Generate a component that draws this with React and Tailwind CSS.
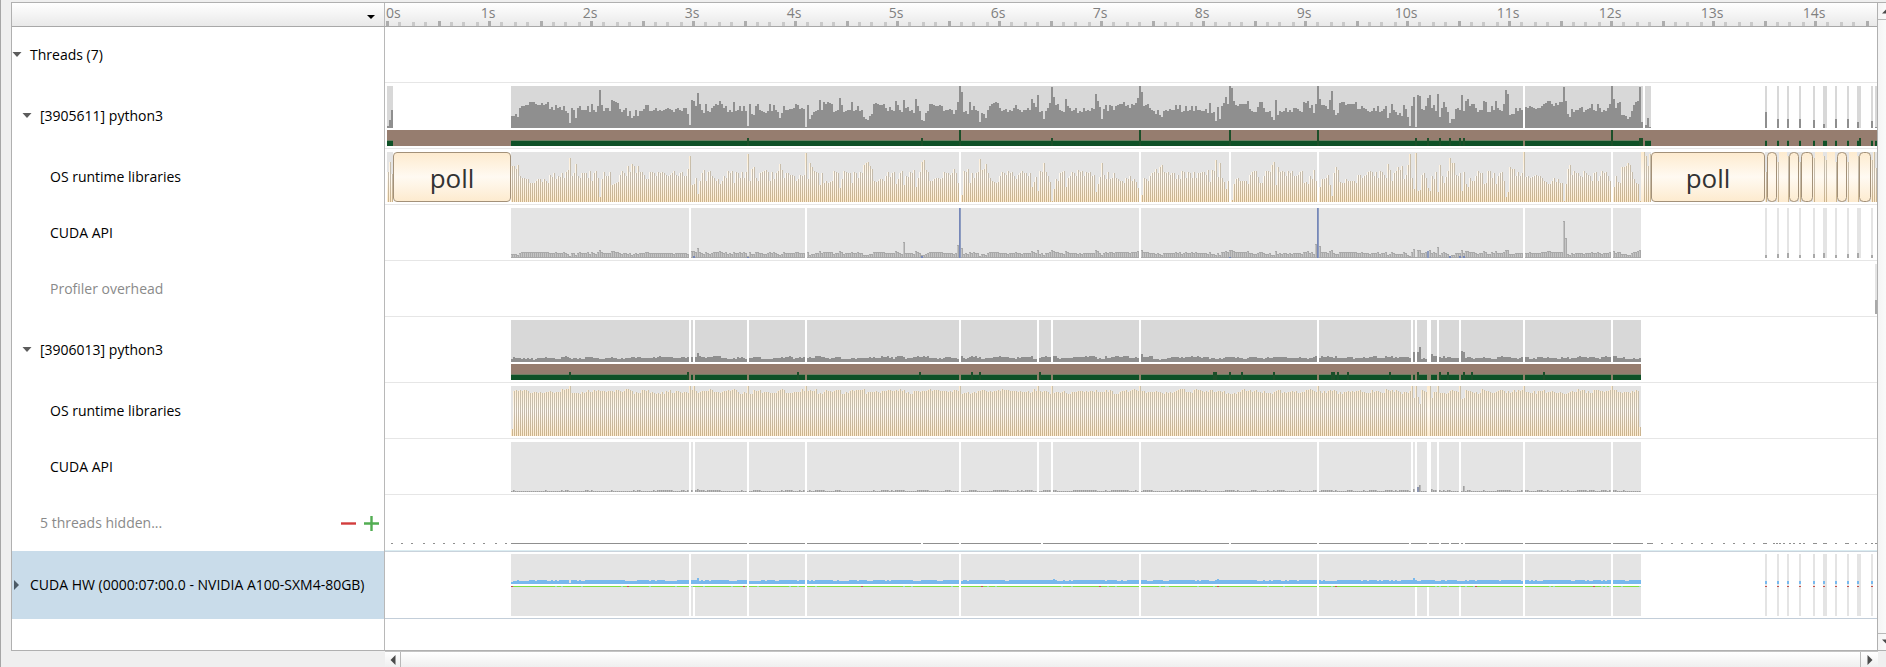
import React from "react";

const ORIGIN = 385;
const SPAN = 1492;
const START = 511;
const END = 1641;

/* Utilisation samples of the main thread: [start position, one height per 2px bin] */
const SAMPLES = [
  [511, [12, 12, 14, 11, 20, 22, 22, 23, 23, 26, 26, 26, 24, 23, 23, 25, 23, 24, 26, 19, 21, 18, 23, 20, 21, 18, 22, 17, 15, 5, 20, 18, 10, 20, 22, 18, 18, 18, 22, 16, 24, 18, 16, 22]],
  [599, [38, 23, 17, 20, 20, 17, 28, 27, 26, 25, 19, 16, 18, 20, 12, 17, 10, 12, 18, 12, 17, 17, 19, 23, 23, 17, 17, 18, 20, 17, 18, 17, 18, 19, 20, 19, 18, 16, 19, 20, 18, 17, 20, 20, 14]],
  [689, [3, 28, 27, 22, 35, 24, 18, 15, 24, 17, 16, 20, 22, 24, 23, 27, 24, 20, 22, 16, 18, 16, 26, 17, 18, 22, 17, 22, 17]],
  [747, [2, 24, 14, 13, 22, 24, 18, 17, 16, 15, 17, 24, 17, 23, 18, 16, 10, 15, 22, 18, 18, 19, 19, 20, 24, 23, 19, 20, 19]],
  [805, [1, 23, 9, 13, 16, 17, 18, 28, 18, 26, 24, 26, 25, 24, 16, 17, 18, 30, 23, 16, 17, 18, 18, 26, 17, 18, 22, 17, 18]],
  [863, [11, 9, 8, 12, 14, 24, 25, 24, 23, 23, 24, 20, 17, 21, 18, 17, 27, 23, 18, 16, 28, 20, 21, 17, 18, 15, 29, 22, 17, 8, 7, 15, 17, 24, 24, 23, 22, 22, 23, 22, 17, 18, 18, 19, 18, 14, 18, 26]],
  [959, [42, 36, 16, 17, 14, 26, 18, 22, 18, 17, 6, 15, 14, 10, 18, 22, 24, 25, 26, 25, 20, 17, 18, 19, 16, 18, 17, 20, 23, 19, 18, 16, 18, 18, 20, 18, 29, 25, 21, 33, 16, 17, 9, 17, 20, 25]],
  [1051, [41, 31, 23, 24, 18, 17, 16, 29, 22, 20, 17, 18, 20, 15, 17, 16, 20, 17, 18, 17, 20, 19, 34, 27, 21, 9, 19, 23, 17, 23, 22, 18, 22, 23, 24, 24, 26, 22, 23, 20, 24, 23, 25, 30]],
  [1139, [42, 36, 22, 23, 24, 20, 18, 17, 14, 18, 13, 11, 17, 18, 17, 19, 18, 18, 23, 19, 23, 16, 17, 22, 17, 18, 22, 17, 22, 18]],
  [1201, [17, 17, 19, 15, 25, 15, 16, 7, 21, 9, 22, 25, 31, 24, 42, 40, 27, 23, 22, 24, 24, 24, 24, 27, 19, 17, 16, 16, 21, 26, 26, 20, 16, 16, 17, 11, 8, 28, 13, 17, 16, 17, 20, 16, 18, 16, 20, 20, 19, 17, 16, 26, 25, 27, 20, 23, 15, 24]],
  [1317, [42, 29, 23, 23, 22, 19, 28, 37, 18, 13, 15, 25, 26, 26, 23, 24, 24, 24, 24, 26, 19, 19, 22, 20, 19, 17, 16, 17, 20, 17, 22, 16, 17, 19, 22, 10, 15, 24, 18, 16, 13, 15, 12, 23, 19, 11]],
  [1409, [2, 22, 31, 1, 33, 32, 19, 18, 22, 30, 33, 20, 23, 17, 34, 11, 20, 26, 21, 16, 5, 9, 9, 19, 20, 18, 33, 17, 27, 29, 22, 24, 24, 20, 16, 18, 18, 27, 26, 16, 16, 22, 18, 27, 20, 18, 17, 24]],
  [1505, [38, 34, 13, 14, 14, 20, 17, 20, 18, 0, 21, 20, 22, 21, 20, 19, 20, 20, 22, 24, 25, 27, 27, 24, 22, 25, 23, 26]],
  [1563, [41, 27, 14, 11, 19, 16, 18, 18, 20, 21, 16, 18, 19, 20, 24, 18, 17, 24, 20, 16, 18, 17, 20, 24]],
  [1611, [42, 29, 20, 25, 26, 13, 13, 12, 9, 11, 17, 23, 26, 27, 41]],
];

const LOAD = {};
SAMPLES.forEach(([start, values], s) => {
  const stop = s + 1 < SAMPLES.length ? SAMPLES[s + 1][0] : END;
  for (let x = start, i = 0; x < stop; x += 2, i += 1) {
    LOAD[x] = values[Math.min(i, values.length - 1)];
  }
});

const BINS = [];
for (let x = START; x < END; x += 2) BINS.push(x);

const noise = (n) => {
  const v = Math.sin(n * 12.9898) * 43758.5453;
  return v - Math.floor(v);
};
const wave = (x, seed) => {
  const k = Math.floor(x / 8);
  return 0.6 * noise(k + seed) + 0.4 * noise(x + seed * 3);
};

/* Short bursts of work after the main run: [position, width, height] */
const BURSTS = [
  [1765, 2, 16], [1777, 2, 9], [1787, 2, 9], [1799, 2, 9], [1813, 2, 8], [1823, 4, 4],
  [1835, 2, 9], [1847, 2, 9], [1857, 4, 6], [1871, 2, 7],
];

const GAPS_MAIN = [959, 1139, 1229, 1317, 1611];
const GAPS_API = [689, 805, 1139, 1523, 1611];
const GAPS_WORKER = [689, 693, 747, 805, 959, 1037, 1051, 1139, 1317, 1411, 1415, 1427, 1429, 1437, 1459, 1523, 1611];
const GAPS_HW = [689, 747, 805, 959, 1139, 1317, 1523, 1611];

function bars(list, base, width = 2) {
  return list.map(([x, h]) => `M${x} ${base}v${-h}h${width}v${h}z`).join("");
}

function Gaps({ at, y, height, fill = "#fff" }) {
  return <path d={bars(at.map((x) => [x, height]), y + height)} fill={fill} />;
}

function Chart({ height, label, children }) {
  return (
    <svg
      className="block max-w-none w-[1492px] shrink-0"
      style={{ height }}
      viewBox={`${ORIGIN} 0 ${SPAN} ${height}`}
      shapeRendering="crispEdges"
      role="img"
      aria-label={label}
    >
      {children}
    </svg>
  );
}

function Band({ segments, gaps, full = [], small }) {
  return (
    <>
      {segments.map(([x, w]) => (
        <g key={x}>
          <rect x={x} y="57" width={w} height="1" fill="#6f8064" />
          <rect x={x} y="58" width={w} height="5" fill="#0f5127" />
        </g>
      ))}
      <path d={bars(full.map((x) => [x, 16]), 63) + bars(small.map((x) => [x, 8]), 63)} fill="#1c4f29" />
      <Gaps at={gaps} y={57} height={6} fill="#8d8069" />
    </>
  );
}

function MainThreadChart() {
  return (
    <Chart height={65} label="Main thread utilisation">
      <path d="M387 3h6v42h-6zM511 3h1132v42h-1132zM1645 3h6v42h-6z" fill="#d8d8d8" />
      {BURSTS.map(([x, w]) => <rect key={x} x={x} y="3" width={w} height="42" fill="#d8d8d8" />)}
      <rect x="1875" y="3" width="2" height="42" fill="#d8d8d8" />
      <path
        d={
          bars(BINS.map((x) => [x, LOAD[x]]), 45) +
          bars([[387, 2], [389, 8], [391, 18], [1641, 6], [1645, 3], [1647, 10], [1649, 1], [1875, 1]], 45) +
          BURSTS.map(([x, , h]) => bars([[x, h]], 45)).join("")
        }
        fill="#8f8f8f"
      />
      <Gaps at={[1523]} y={3} height={42} />
      <rect x="387" y="47" width="1490" height="16" fill="#967d6f" />
      <Band
        segments={[[387, 6], [511, 1132], [1645, 6], ...BURSTS.map(([x, w]) => [x, w]), [1875, 2]]}
        gaps={[1523]}
        full={[959, 1139, 1229, 1317, 1611]}
        small={[747, 921, 1051, 1415, 1427, 1439, 1449, 1459, 1463, 1639, 1641, 1859]}
      />
    </Chart>
  );
}

function CallGradients({ id }) {
  return (
    <defs>
      <linearGradient id={`${id}-fill`} gradientUnits="userSpaceOnUse" x1="0" y1="3" x2="0" y2="53">
        <stop offset="0" stopColor="#fdebcf" />
        <stop offset="0.5" stopColor="#fffaf2" />
        <stop offset="1" stopColor="#fdebcf" />
      </linearGradient>
      <linearGradient id={`${id}-edge`} gradientUnits="userSpaceOnUse" x1="0" y1="3" x2="0" y2="53">
        <stop offset="0" stopColor="#cdc1a8" />
        <stop offset="0.5" stopColor="#c4bbad" />
        <stop offset="1" stopColor="#ccb48c" />
      </linearGradient>
    </defs>
  );
}

function Calls({ id, list }) {
  return (
    <>
      <path d={bars(list, 53)} fill={`url(#${id}-fill)`} />
      <path d={bars(list.map(([x, h]) => [x + 1, h]), 53, 1)} fill={`url(#${id}-edge)`} />
    </>
  );
}

function MainRuntimeChart() {
  const list = BINS.map((x) => [x, Math.max(1, Math.round(50 - LOAD[x] * 1.19))]);
  return (
    <Chart height={55} label="Main thread OS runtime calls">
      <CallGradients id="main" />
      <path d="M387 3h6v50h-6zM511 3h1140v50h-1140zM1765 3h112v50h-112z" fill="#e4e4e4" />
      <Calls id="main" list={[[387, 30], [389, 40], [391, 28], ...list, [1643, 50], [1645, 46], [1647, 36], [1649, 48]]} />
      <path d="M1641 3h3v50h-3zM1779 3h8v50h-8zM1815 3h8v50h-8zM1827 3h8v50h-8zM1849 3h8v50h-8z" fill="url(#main-fill)" />
      <Calls id="main" list={[[1765, 30], [1777, 40], [1787, 46], [1799, 40], [1813, 44], [1823, 46], [1825, 42], [1835, 40], [1847, 40], [1857, 46], [1871, 42], [1873, 50], [1875, 34]]} />
      <Gaps at={GAPS_MAIN} y={3} height={50} />
      <g fill="url(#main-fill)" stroke="#a39179" shapeRendering="auto">
        {[[1767, 10], [1789, 10], [1801, 12], [1837, 10], [1859, 12]].map(([x, w]) => (
          <rect key={x} x={x + 0.5} y="3.5" width={w - 1} height="49" rx="4" />
        ))}
      </g>
    </Chart>
  );
}

function MainApiChart() {
  const special = { 697: 10, 903: 16, 957: 13, 961: 10, 1315: 14, 1319: 12, 1413: 9, 1437: 11, 1563: 37, 1565: 20 };
  const list = BINS.map((x) => [x, special[x] || Math.min(8, Math.max(1, Math.round(LOAD[x] * 0.2 + 1.2)))]);
  return (
    <Chart height={55} label="Main thread CUDA API calls">
      <rect x={START} y="3" width={END - START} height="50" fill="#e4e4e4" />
      {BURSTS.map(([x, w]) => <rect key={x} x={x} y="3" width={w} height="50" fill="#e4e4e4" />)}
      <path d={bars(list, 53) + BURSTS.map(([x], i) => bars([[x, 3 + (i % 3)]], 53)).join("")} fill="#a9a9a9" />
      <path d={list.filter(([, h]) => h > 2).map(([x, h]) => bars([[x, h - 2]], 52, 1)).join("")} fill="#c4c4c4" />
      <Gaps at={GAPS_API} y={3} height={50} />
      <path d={bars([[959, 50], [1317, 50], [1427, 7]], 53)} fill="#8c9bc0" />
      <path d={bars([[959, 50], [1317, 50]], 53, 1) + bars([[693, 2], [747, 1], [921, 2], [1229, 1], [1449, 2], [1459, 2], [1463, 2]], 53)} fill="#7687b8" />
    </Chart>
  );
}

function OverheadChart() {
  return (
    <Chart height={55} label="Profiler overhead">
      <rect x="1875" y="3" width="2" height="50" fill="#e4e4e4" />
      <rect x="1875" y="39" width="2" height="14" fill="#a9a9a9" />
    </Chart>
  );
}

function WorkerChart() {
  const special = { 697: 9, 1413: 10, 1417: 10, 1419: 15, 1431: 8, 1461: 11, 1463: 10, 961: 6, 1141: 8 };
  const list = BINS.map((x) => [x, special[x] || 2 + Math.round(0.4 + wave(x, 7) * 4)]);
  return (
    <Chart height={65} label="Worker thread utilisation">
      <rect x={START} y="3" width={END - START} height="42" fill="#d8d8d8" />
      <path d={bars(list, 45)} fill="#8f8f8f" />
      <Gaps at={GAPS_WORKER} y={3} height={42} />
      <rect x={START} y="47" width={END - START} height="16" fill="#967d6f" />
      <Band
        segments={[[START, END - START]]}
        gaps={GAPS_WORKER}
        small={[569, 687, 797, 919, 971, 979, 1039, 1213, 1215, 1229, 1241, 1273, 1331, 1333, 1337, 1347, 1389, 1417, 1439, 1447, 1463, 1471, 1543]}
      />
    </Chart>
  );
}

function WorkerRuntimeChart() {
  const low = { 511: 7, 1413: 38, 1417: 39, 1419: 32, 1431: 38, 1461: 37, 1463: 38, 1639: 9 };
  const list = BINS.map((x) => [
    x,
    low[x] || (GAPS_WORKER.includes(x) || x === 569 ? 50 : 42 + Math.round(wave(x, 31) * 6 - 0.6)),
  ]);
  return (
    <Chart height={55} label="Worker thread OS runtime calls">
      <CallGradients id="worker" />
      <rect x={START} y="3" width={END - START} height="50" fill="#e4e4e4" />
      <Calls id="worker" list={list} />
      <rect x="1427" y="3" width="3" height="50" fill="url(#worker-fill)" />
    </Chart>
  );
}

function WorkerApiChart() {
  const special = { 697: 3, 1413: 3, 1417: 5, 1419: 7, 1431: 3, 1463: 6 };
  const list = BINS.map((x) => [x, special[x] || (wave(x, 7) > 0.55 ? 2 : 1)]);
  return (
    <Chart height={55} label="Worker thread CUDA API calls">
      <rect x={START} y="3" width={END - START} height="50" fill="#e4e4e4" />
      <path d={bars(list, 53)} fill="#b9b9b9" />
      <path d={bars(list, 53, 1)} fill="#9f9f9f" />
      <Gaps at={GAPS_WORKER} y={3} height={50} />
      <rect x="1417" y="48" width="2" height="5" fill="#8c95b0" />
    </Chart>
  );
}

function HiddenThreadsChart() {
  const lead = [391, 401, 411, 423, 433, 443, 453, 463, 473, 483, 495, 505];
  const tail = [1661, 1671, 1681, 1691, 1701, 1711, 1723, 1733, 1743, 1753, 1763, 1765, 1773, 1776, 1779, 1783, 1789, 1793, 1799, 1803, 1813, 1815, 1823, 1825, 1835, 1845, 1847, 1855, 1865, 1871, 1875];
  return (
    <Chart height={55} label="Hidden threads activity">
      <path d={`M511 48h1132v1h-1132zM1647 48h6v1h-6z${bars([...lead, ...tail].map((x) => [x, 1]), 49)}`} fill="#8f8f8f" />
      <Gaps at={[747, 805, 921, 959, 1041, 1229, 1317, 1409, 1427, 1439, 1449, 1459, 1463, 1523, 1611]} y={48} height={1} />
    </Chart>
  );
}

function HardwareChart() {
  const special = { 511: 2, 569: 1, 697: 6, 1053: 5, 1217: 5, 1413: 6 };
  const list = BINS.map((x) => [x, special[x] || (wave(x, 19) > 0.36 ? 4 : 3)]);
  return (
    <Chart height={66} label="CUDA hardware activity">
      <rect x={START} y="2" width={END - START} height="62" fill="#e4e4e4" />
      {BURSTS.map(([x, w]) => <rect key={x} x={x} y="2" width={w} height="62" fill="#e4e4e4" />)}
      <path d={bars(list, 32) + BURSTS.map(([x]) => bars([[x, 3]], 32)).join("")} fill="#78b9ee" />
      <rect x={START} y="32" width={END - START} height="2" fill="#fff" />
      <rect x={START} y="34" width={END - START} height="1" fill="#80e040" />
      <path d={bars(BINS.filter((x) => noise(x + 5) > 0.92).map((x) => [x, 1]), 35)} fill="#9be0b0" />
      <path
        d={bars([511, 627, 743, 861, 981, 1099, 1217, 1335, 1475, 1593, ...BURSTS.map(([x]) => x)].map((x) => [x, 1]), 35)}
        fill="#c4504a"
      />
      <Gaps at={GAPS_HW} y={2} height={62} />
      <Gaps at={[693, 1415, 1427, 1459]} y={35} height={29} />
    </Chart>
  );
}

function Caret({ open = true }) {
  return (
    <svg width="10" height="10" viewBox="0 0 10 10" aria-hidden="true">
      {open ? <path d="M0.5 2h9L5 7z" fill="#5c5c5c" /> : <path d="M2 0v10l5-5z" fill="#4d5b66" />}
    </svg>
  );
}

function Poll({ className }) {
  return (
    <div
      className={`absolute top-[3px] flex h-[50px] items-center justify-center rounded border border-[#a39179] bg-linear-to-b from-[#fdebcf] via-[#fffaf2] to-[#fdebcf] pt-[2px] text-[26px] leading-8 text-[#333] ${className}`}
    >
      poll
    </div>
  );
}

const ROWS = [
  { name: "Threads (7)", indent: "pl-0", caret: true, open: true, height: "h-14" },
  { name: "[3905611] python3", indent: "pl-[10px]", caret: true, open: true, height: "h-[66px]", chart: MainThreadChart },
  { name: "OS runtime libraries", indent: "pl-[38px]", height: "h-14", chart: MainRuntimeChart, polls: true },
  { name: "CUDA API", indent: "pl-[38px]", height: "h-14", chart: MainApiChart },
  { name: "Profiler overhead", indent: "pl-[38px]", height: "h-14", muted: true, chart: OverheadChart },
  { name: "[3906013] python3", indent: "pl-[10px]", caret: true, open: true, height: "h-[66px]", chart: WorkerChart },
  { name: "OS runtime libraries", indent: "pl-[38px]", height: "h-14", chart: WorkerRuntimeChart },
  { name: "CUDA API", indent: "pl-[38px]", height: "h-14", chart: WorkerApiChart },
  { name: "5 threads hidden...", indent: "pl-[28px]", height: "h-14", muted: true, tools: true, chart: HiddenThreadsChart },
  { name: "CUDA HW (0000:07:00.0 - NVIDIA A100-SXM4-80GB)", indent: "pl-0", caret: true, open: false, height: "h-[68px]", selected: true, chart: HardwareChart },
];

function Row({ row }) {
  const ChartBody = row.chart;
  const line = row.selected
    ? "border-t border-b border-t-[#c9d3dc] border-b-[#c3ced9]"
    : row.tools
      ? "border-b border-[#dcedf2]"
      : "border-b border-[#e6e6e6]";
  return (
    <div className={`flex ${row.height}`}>
      <div
        className={`flex w-[373px] shrink-0 items-center border-r border-[#b8b8b8] pr-[5px] ${row.indent} ${
          row.selected ? "bg-[#c9dcea]" : ""
        } ${row.muted ? "text-[#8a8a8a]" : "text-black"}`}
      >
        {row.caret && (
          <button type="button" className="mr-2 shrink-0" aria-label={`Toggle ${row.name}`} aria-expanded={row.open}>
            <Caret open={row.open} />
          </button>
        )}
        <span className="grow whitespace-nowrap">{row.name}</span>
        {row.tools && (
          <span className="flex gap-2">
            <button type="button" aria-label="Show fewer threads">
              <svg className="block" width="15" height="15" viewBox="0 0 15 15" aria-hidden="true">
                <path d="M0 7.5h15" stroke="#d23c3c" strokeWidth="2.4" />
              </svg>
            </button>
            <button type="button" aria-label="Show more threads">
              <svg className="block" width="15" height="15" viewBox="0 0 15 15" aria-hidden="true">
                <path d="M0 7.5h15M7.5 0v15" stroke="#52ad52" strokeWidth="2.4" />
              </svg>
            </button>
          </span>
        )}
      </div>
      <div className={`relative min-w-0 grow overflow-hidden ${line}`}>
        {ChartBody && <ChartBody />}
        {row.polls && (
          <>
            <Poll className="left-[8px] w-[118px]" />
            <Poll className="left-[1266px] w-[114px]" />
          </>
        )}
      </div>
    </div>
  );
}

const SECONDS = Array.from({ length: 14 }, (_, i) => i + 1);
const TICKS = Array.from({ length: 117 }, (_, i) => ({ x: 386 + 2 * Math.round((i * 12.75) / 2), major: i % 4 === 0 }));

function Header() {
  return (
    <div className="flex h-[25px] border-t border-b border-t-[#b0b0b0] border-b-[#a8a8a8] bg-linear-to-b from-white to-[#e9e9e9]">
      <div className="flex w-[373px] shrink-0 items-center justify-end border-r border-[#b8b8b8] pt-1 pr-2">
        <button type="button" aria-label="View options">
          <svg className="block" width="10" height="6" viewBox="0 0 10 6" aria-hidden="true">
            <path d="M1 1h8L5 5z" fill="#000" />
          </svg>
        </button>
      </div>
      <div className="relative min-w-0 grow overflow-hidden">
        <div className="flex text-[14px] leading-5 text-[#808080]">
          <span className="w-[52px] shrink-0 pl-px">0s</span>
          {SECONDS.map((s) => (
            <span key={s} className="w-[102px] shrink-0 text-center">{s}s</span>
          ))}
        </div>
        <div className="absolute bottom-0 left-0">
          <Chart height={5} label="Time scale">
            {TICKS.map(({ x, major }) =>
              major ? (
                <rect key={x} x={x} y="0" width="3" height="5" fill="#adadad" />
              ) : (
                <rect key={x} x={x} y="1" width="3" height="4" fill="#c9c9c9" />
              ),
            )}
          </Chart>
        </div>
      </div>
    </div>
  );
}

export default function App() {
  return (
    <div className="flex w-full overflow-hidden border-l border-[#a6a6a6] bg-[#efefef] pt-[2px] font-['Open_Sans','Noto_Sans',sans-serif] text-[14px] leading-5">
      <div className="ml-[10px] min-w-0 grow">
        <main className="border-r border-b border-l border-[#b0b0b0] bg-white">
          <Header />
          {ROWS.map((row, i) => (
            <Row key={i} row={row} />
          ))}
          <div className="flex h-[31px]">
            <div className="w-[373px] shrink-0 border-r border-[#b8b8b8]" />
          </div>
        </main>
        <div className="flex h-4 pl-[374px]">
          <div className="flex h-4 grow border-t border-[#c4c4c4] bg-linear-to-b from-white to-[#efefef]">
            <button type="button" aria-label="Scroll left" className="flex w-4 items-center justify-center border-r border-[#b8b8b8]">
              <svg width="6" height="10" viewBox="0 0 6 10" aria-hidden="true"><path d="M5.500 0v10L0.500 5z" fill="#4a4a4a" /></svg>
            </button>
            <div className="grow" />
            <button type="button" aria-label="Scroll right" className="flex w-[18px] items-center justify-center border-l border-[#b8b8b8]">
              <svg width="6" height="10" viewBox="0 0 6 10" aria-hidden="true"><path d="M0.500 0v10L5.500 5z" fill="#4a4a4a" /></svg>
            </button>
          </div>
        </div>
      </div>
      <div className="flex w-2 shrink-0 flex-col overflow-hidden pb-4">
        <div className="flex w-4 grow flex-col border-t border-b border-[#b0b0b0] bg-linear-to-r from-[#f4f4f4] to-white">
          <button type="button" aria-label="Scroll up" className="flex h-[17px] items-center border-b border-[#b8b8b8] pl-1">
            <svg width="10" height="6" viewBox="0 0 10 6" aria-hidden="true"><path d="M0 5.500h10L5 0.500z" fill="#4a4a4a" /></svg>
          </button>
          <div className="grow" />
          <button type="button" aria-label="Scroll down" className="flex h-[17px] items-center border-t border-[#b8b8b8] pl-1">
            <svg width="10" height="6" viewBox="0 0 10 6" aria-hidden="true"><path d="M0 0.500h10L5 5.500z" fill="#4a4a4a" /></svg>
          </button>
        </div>
      </div>
    </div>
  );
}
